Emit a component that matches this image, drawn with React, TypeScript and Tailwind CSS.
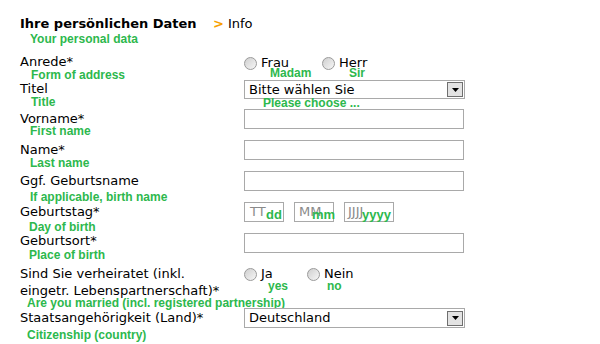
import React from 'react';

const label = "text-[13px] leading-[16px] text-black";
const note = "text-[12px] leading-[14px] font-bold text-[#2db84d] whitespace-nowrap";
const box = "h-[20px] border border-[#a9a9a9] bg-white";

function Radio({ text }: { text: string }) {
  return (
    <span className="flex items-center gap-[4px]">
      <span className="w-[13px] h-[13px] rounded-full border border-[#9a9a9a] bg-gradient-to-br from-[#cfcfcf] to-[#f7f7f7]" />
      <span className={label}>{text}</span>
    </span>
  );
}

function Select({ value, h = 19 }: { value: string; h?: number }) {
  return (
    <div className={`w-[221px] ${h === 19 ? 'h-[19px]' : 'h-[20px]'} border border-[#a9a9a9] bg-white flex items-center justify-between pl-[4px] pr-[1px]`}>
      <span className={label}>{value}</span>
      <span className="w-[16px] h-[15px] border border-[#6f6f6f] bg-[#e3e3e3] flex items-center justify-center">
        <svg width="7" height="4" viewBox="0 0 7 4"><path d="M0 0h7L3.5 4z" fill="#000" /></svg>
      </span>
    </div>
  );
}

function Row({ h, children }: { h: string; children: React.ReactNode }) {
  return <div className={`flex ${h}`}>{children}</div>;
}

export default function App() {
  return (
    <div className="w-[600px] h-[344px] bg-white overflow-hidden pl-[20px] font-['DejaVu_Sans',Verdana,sans-serif]">
      <div className="h-[52px] pt-[16px]">
        <div className="flex items-baseline">
          <span className="w-[193px] text-[13px] leading-[16px] font-bold text-black">Ihre persönlichen Daten</span>
          <span className="text-[13px] leading-[16px] font-bold text-[#f7a000]">&gt;</span>
          <span className="ml-[4px] text-[13px] leading-[16px] text-black">Info</span>
        </div>
        <div className={`${note} pl-[10px] font-['Liberation_Sans',Arial,sans-serif]`}>Your personal data</div>
      </div>

      <div className="font-['Liberation_Sans',Arial,sans-serif] hidden" />

      <Row h="h-[28px]">
        <div className="w-[224px] pt-[2px]">
          <div className={label}>Anrede*</div>
          <div className={`${note} pl-[11px] mt-[-2px] font-['Liberation_Sans',Arial,sans-serif]`}>Form of address</div>
        </div>
        <div className="flex pt-[3px]">
          <div className="w-[78px]">
            <Radio text="Frau" />
            <div className={`${note} pl-[26px] mt-[-5px] font-['Liberation_Sans',Arial,sans-serif]`}>Madam</div>
          </div>
          <div>
            <Radio text="Herr" />
            <div className={`${note} pl-[27px] mt-[-5px] font-['Liberation_Sans',Arial,sans-serif]`}>Sir</div>
          </div>
        </div>
      </Row>

      <Row h="h-[29px]">
        <div className="w-[224px] pt-[1px]">
          <div className={label}>Titel</div>
          <div className={`${note} pl-[11px] mt-[-2px] font-['Liberation_Sans',Arial,sans-serif]`}>Title</div>
        </div>
        <div>
          <Select value="Bitte wählen Sie" />
          <div className={`${note} pl-[19px] mt-[-3px] font-['Liberation_Sans',Arial,sans-serif]`}>Please choose ...</div>
        </div>
      </Row>

      {[
        { l: 'Vorname*', n: 'First name', mt: 'mt-[-3px]' },
        { l: 'Name*', n: 'Last name', mt: 'mt-[-2px]' },
        { l: 'Ggf. Geburtsname', n: 'If applicable, birth name', mt: 'mt-[1px]' },
      ].map((r) => (
        <Row key={r.l} h="h-[31px]">
          <div className="w-[224px] pt-[2px]">
            <div className={label}>{r.l}</div>
            <div className={`${note} pl-[10px] ${r.mt} font-['Liberation_Sans',Arial,sans-serif]`}>{r.n}</div>
          </div>
          <div className={`w-[220px] ${box}`} />
        </Row>
      ))}

      <Row h="h-[31px]">
        <div className="w-[224px] pt-[2px]">
          <div className={label}>Geburtstag*</div>
          <div className={`${note} pl-[9px] mt-[0px] font-['Liberation_Sans',Arial,sans-serif]`}>Day of birth</div>
        </div>
        <div className="flex gap-[10px]">
          <div className={`w-[40px] ${box} flex items-center pl-[5px] relative`}>
            <span className="text-[13px] leading-[16px] text-[#8a8a8a]">TT</span>
            <span className={`${note} absolute left-[21px] top-[5px] text-[13px] font-['Liberation_Sans',Arial,sans-serif]`}>dd</span>
          </div>
          <div className={`w-[40px] ${box} flex items-center pl-[4px] relative`}>
            <span className="text-[13px] leading-[16px] text-[#8a8a8a]">MM</span>
            <span className={`${note} absolute left-[17px] top-[5px] text-[13px] font-['Liberation_Sans',Arial,sans-serif]`}>mm</span>
          </div>
          <div className={`w-[50px] ${box} flex items-center pl-[3px] relative`}>
            <span className="text-[13px] leading-[16px] text-[#8a8a8a]">JJJJ</span>
            <span className={`${note} absolute left-[17px] top-[5px] text-[13px] font-['Liberation_Sans',Arial,sans-serif]`}>yyyy</span>
          </div>
        </div>
      </Row>

      <Row h="h-[30px]">
        <div className="w-[224px] pt-[0px]">
          <div className={label}>Geburtsort*</div>
          <div className={`${note} pl-[9px] mt-[-1px] font-['Liberation_Sans',Arial,sans-serif]`}>Place of birth</div>
        </div>
        <div className={`w-[220px] ${box}`} />
      </Row>

      <Row h="h-[45px]">
        <div className="w-[224px] pt-[2px]">
          <div className={`${label} leading-[17px] whitespace-nowrap`}>Sind Sie verheiratet (inkl.</div>
          <div className={`${label} leading-[17px] whitespace-nowrap`}>eingetr. Lebenspartnerschaft)*</div>
          <div className={`${note} pl-[7px] mt-[-3px] font-['Liberation_Sans',Arial,sans-serif]`}>Are you married (incl. registered partnership)</div>
        </div>
        <div className="flex pt-[3px]">
          <div className="w-[63px]">
            <Radio text="Ja" />
            <div className={`${note} pl-[24px] mt-[-3px] font-['Liberation_Sans',Arial,sans-serif]`}>yes</div>
          </div>
          <div>
            <Radio text="Nein" />
            <div className={`${note} pl-[20px] mt-[-3px] font-['Liberation_Sans',Arial,sans-serif]`}>no</div>
          </div>
        </div>
      </Row>

      <Row h="h-[36px]">
        <div className="w-[224px] pt-[2px]">
          <div className={`${label} whitespace-nowrap`}>Staatsangehörigkeit (Land)*</div>
          <div className={`${note} pl-[7px] mt-[2px] font-['Liberation_Sans',Arial,sans-serif]`}>Citizenship (country)</div>
        </div>
        <div>
          <Select value="Deutschland" h={20} />
        </div>
      </Row>
    </div>
  );
}
